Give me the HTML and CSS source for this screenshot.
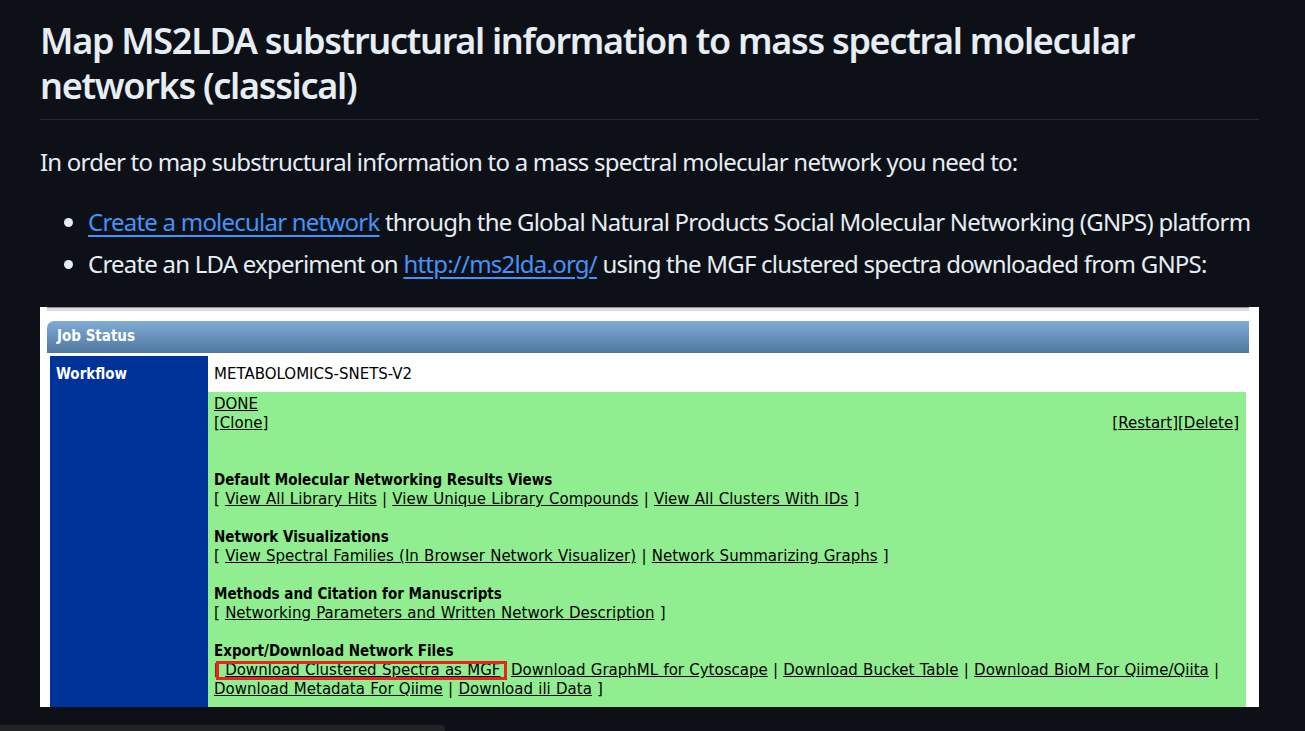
FILE: index.html
```html
<!DOCTYPE html>
<html lang="en">
<head>
<meta charset="utf-8">
<title>Map MS2LDA substructural information</title>
<link rel="stylesheet" href="styles.css">
</head>
<body>
<article class="markdown">
  <h2 class="title">Map MS2LDA substructural information to mass spectral molecular networks (classical)</h2>
  <p class="lead">In order to map substructural information to a mass spectral molecular network you need to:</p>
  <ul class="steps">
    <li><a href="#">Create a molecular network</a> through the Global Natural Products Social Molecular Networking (GNPS) platform</li>
    <li>Create an LDA experiment on <a href="#">http://ms2lda.org/</a> using the MGF clustered spectra downloaded from GNPS:</li>
  </ul>
  <div class="shot">
    <div class="shot-rule"></div>
    <div class="shot-bar">Job Status</div>
    <div class="shot-table">
      <div class="cell-head">Workflow</div>
      <div class="cell-name">METABOLOMICS-SNETS-V2</div>
      <div class="cell-status">
        <div class="line"><span class="u">DONE</span></div>
        <div class="line split"><span>[<span class="u">Clone</span>]</span><span>[<span class="u">Restart</span>][<span class="u">Delete</span>]</span></div>
        <div class="group">
          <div class="line b">Default Molecular Networking Results Views</div>
          <div class="line">[ <span class="u">View All Library Hits</span> | <span class="u">View Unique Library Compounds</span> | <span class="u">View All Clusters With IDs</span> ]</div>
        </div>
        <div class="group">
          <div class="line b">Network Visualizations</div>
          <div class="line">[ <span class="u">View Spectral Families (In Browser Network Visualizer)</span> | <span class="u">Network Summarizing Graphs</span> ]</div>
        </div>
        <div class="group">
          <div class="line b">Methods and Citation for Manuscripts</div>
          <div class="line">[ <span class="u">Networking Parameters and Written Network Description</span> ]</div>
        </div>
        <div class="group">
          <div class="line b">Export/Download Network Files</div>
          <div class="line">[<span class="hl"> <span class="u">Download Clustered Spectra as MGF</span>&nbsp;</span> <span class="u">Download GraphML for Cytoscape</span> | <span class="u">Download Bucket Table</span> | <span class="u">Download BioM For Qiime/Qiita</span> |</div>
          <div class="line"><span class="u">Download Metadata For Qiime</span> | <span class="u">Download ili Data</span> ]</div>
        </div>
      </div>
    </div>
  </div>
</article>
<div class="scroll-thumb"></div>
</body>
</html>
```
FILE: styles.css
```css
html, body {
  margin: 0;
  padding: 0;
  background: #0d1117;
  height: 100%;
  overflow: hidden;
}
body {
  color: #e6edf3;
  font-family: "Noto Sans", "Liberation Sans", sans-serif;
  font-size: 24px;
  line-height: 1.5;
  letter-spacing: -0.78px;
}
.markdown {
  padding: 18px 46px 0 40px;
}
.title {
  margin: 0 0 24px 0;
  font-size: 36px;
  font-weight: 600;
  line-height: 1.25;
  letter-spacing: -1.3px;
  padding-bottom: 11px;
  border-bottom: 1px solid #262b33;
}
.lead {
  margin: 0 0 24px 0;
}
.steps {
  margin: 0 0 25px 0;
  padding-left: 48px;
}
.steps li {
  white-space: nowrap;
}
.steps li + li {
  margin-top: 6px;
}
.steps a {
  color: #4493f8;
  text-decoration: underline;
  text-underline-offset: 4px;
}
.shot {
  background: #fff;
  height: 400px;
  overflow: hidden;
  padding: 0 10px 0 7px;
  font-family: "DejaVu Sans", sans-serif;
  font-size: 15px;
  line-height: 19px;
  letter-spacing: 0;
  word-spacing: 0.5px;
  color: #000;
}
.shot-rule {
  height: 3px;
  border-top: 1px solid #8e8e8e;
  background: #dedede;
}
.shot-bar {
  margin-top: 10px;
  height: 32px;
  line-height: 31px;
  padding-left: 10px;
  border-top-left-radius: 7px;
  background: linear-gradient(#80acd7, #4f789f);
  color: #fff;
  font-family: "DejaVu Sans Condensed", "DejaVu Sans", sans-serif;
  font-weight: bold;
  font-size: 15px;
  word-spacing: 0;
}
.shot-table {
  margin: 3px 3px 0 3px;
  display: grid;
  grid-template-columns: 158px 1fr;
  grid-template-rows: 36px 1fr;
  height: 351px;
}
.cell-head {
  grid-row: 1 / 3;
  background: #003399;
  color: #fff;
  font-family: "DejaVu Sans Condensed", "DejaVu Sans", sans-serif;
  font-weight: bold;
  padding: 9px 6px;
}
.cell-name {
  padding: 9px 6px;
  background: #fff;
  word-spacing: 0;
}
.cell-status {
  background: #90ee90;
  padding: 3px 7px 0 6px;
}
.line {
  white-space: nowrap;
}
.split {
  display: flex;
  justify-content: space-between;
}
.group {
  margin-top: 19px;
}
.split + .group {
  margin-top: 38px;
}
.b {
  font-family: "DejaVu Sans Condensed", "DejaVu Sans", sans-serif;
  font-weight: bold;
  word-spacing: 0;
}
.u {
  text-decoration: underline;
}
.hl {
  position: relative;
}
.hl::after {
  content: "";
  position: absolute;
  left: -4px;
  right: -1px;
  top: 0px;
  bottom: -1px;
  border: 3px solid #e8261c;
}
.scroll-thumb {
  position: fixed;
  left: 0;
  bottom: 0;
  width: 445px;
  height: 6px;
  background: #212325;
  border-top-right-radius: 4px;
}
```
